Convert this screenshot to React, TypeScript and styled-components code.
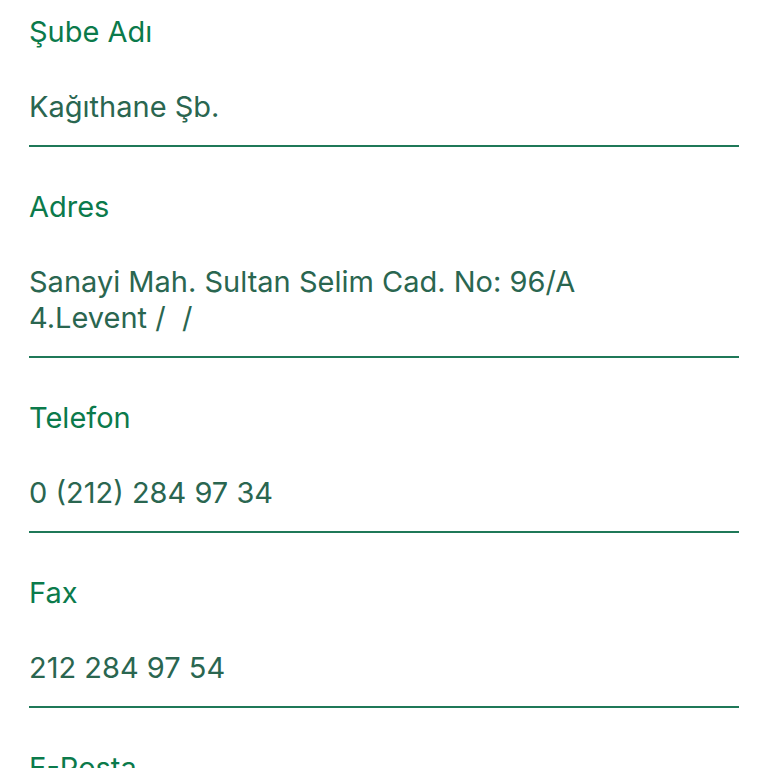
import * as React from 'react';
import styled, { createGlobalStyle } from 'styled-components';

const GlobalStyle = createGlobalStyle`
    html, body {
        margin: 0;
        padding: 0;
        background: #ffffff;
    }
    body {
        font-family: Inter, "Liberation Sans", Arial, sans-serif;
    }`;

const Page = styled.div`
    padding: 0 29px;
    height: 768px;
    overflow: hidden;`;

const Item = styled.div`
    display: flex;
    flex-direction: column;
    gap: 39px;
    padding: 42px 0 20px;
    border-bottom: 2px solid #1f7858;

    &:first-child {
        padding-top: 14px;
    }`;

const Label = styled.div`
    font-size: 29px;
    line-height: 36px;
    color: #0b7a4b;`;

const Value = styled.div`
    font-size: 29px;
    line-height: 36px;
    color: #2a6650;
    white-space: pre-wrap;`;

const rows = [
    { label: 'Şube Adı', value: 'Kağıthane Şb.' },
    { label: 'Adres', value: 'Sanayi Mah. Sultan Selim Cad. No: 96/A\n4.Levent /  /' },
    { label: 'Telefon', value: '0 (212) 284 97 34' },
    { label: 'Fax', value: '212 284 97 54' },
    { label: 'E-Posta', value: 'kagithane@sube.com.tr' },
];

class App extends React.Component {
    render() {
        return (
            <>
                <GlobalStyle/>
                <Page>
                    {rows.map(row => (
                        <Item key={row.label}>
                            <Label>{row.label}</Label>
                            <Value>{row.value}</Value>
                        </Item>
                    ))}
                </Page>
            </>
        );
    }
}

export default App;
